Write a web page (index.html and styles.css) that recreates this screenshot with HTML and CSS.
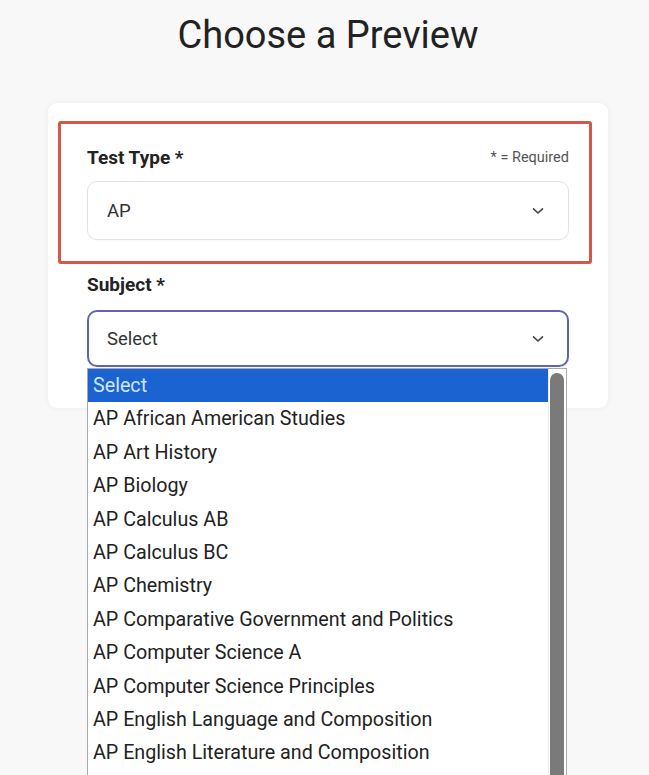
FILE: index.html
```html
<!DOCTYPE html>
<html lang="en">
<head>
<meta charset="utf-8">
<title>Choose a Preview</title>
<link rel="stylesheet" href="styles.css">
</head>
<body>
<main class="page">
  <h1 class="title">Choose a Preview</h1>
  <section class="card">
    <div class="field field-test">
      <div class="highlight"></div>
      <div class="label-row">
        <label class="label">Test Type *</label>
        <span class="required">* = Required</span>
      </div>
      <div class="select">
        <span class="value">AP</span>
        <svg class="chev" width="12" height="8" viewBox="0 0 12 8"><path d="M1.5 1.8 L6 6 L10.5 1.8" fill="none" stroke="#444" stroke-width="1.6" stroke-linecap="round" stroke-linejoin="round"/></svg>
      </div>
    </div>
    <div class="field field-subject">
      <div class="label-row">
        <label class="label">Subject *</label>
      </div>
      <div class="select select-focus">
        <span class="value">Select</span>
        <svg class="chev" width="12" height="8" viewBox="0 0 12 8"><path d="M1.5 1.8 L6 6 L10.5 1.8" fill="none" stroke="#444" stroke-width="1.6" stroke-linecap="round" stroke-linejoin="round"/></svg>
      </div>
      <div class="dropdown">
        <ul class="options">
          <li class="opt active">Select</li>
          <li class="opt">AP African American Studies</li>
          <li class="opt">AP Art History</li>
          <li class="opt">AP Biology</li>
          <li class="opt">AP Calculus AB</li>
          <li class="opt">AP Calculus BC</li>
          <li class="opt">AP Chemistry</li>
          <li class="opt">AP Comparative Government and Politics</li>
          <li class="opt">AP Computer Science A</li>
          <li class="opt">AP Computer Science Principles</li>
          <li class="opt">AP English Language and Composition</li>
          <li class="opt">AP English Literature and Composition</li>
        </ul>
        <div class="scrollbar"><div class="thumb"></div></div>
      </div>
    </div>
  </section>
</main>
</body>
</html>
```

FILE: styles.css
```css
html, body {
  margin: 0;
  padding: 0;
  background: #f8f8f8;
  height: 100%;
  overflow: hidden;
}
body {
  font-family: Roboto, "Liberation Sans", Arial, sans-serif;
  color: #222;
}
.page {
  width: 560px;
  margin-left: 48px;
}
.title {
  margin: 0;
  padding-top: 13px;
  height: 103px;
  box-sizing: border-box;
  font-size: 38px;
  line-height: 44px;
  font-weight: 400;
  text-align: center;
  color: #222;
}
.card {
  background: #fff;
  border-radius: 9px;
  box-shadow: 0 0 6px rgba(0,0,0,0.05);
  padding: 43px 39px 41px;
}
.field {
  position: relative;
}
.highlight {
  position: absolute;
  left: -29px;
  top: -25px;
  right: -23px;
  height: 143px;
  box-sizing: border-box;
  border: 3px solid #d4574a;
  border-radius: 3px;
  pointer-events: none;
}
.label-row {
  display: flex;
  align-items: center;
  justify-content: space-between;
  height: 22px;
}
.label {
  font-size: 19px;
  font-weight: 700;
  color: #222;
}
.required {
  font-size: 14.5px;
  color: #555;
}
.select {
  margin-top: 13px;
  height: 59px;
  box-sizing: border-box;
  border: 1px solid #e2e2e2;
  border-radius: 10px;
  display: flex;
  align-items: center;
  justify-content: space-between;
  padding: 0 24px 0 19px;
  box-shadow: 0 1px 2px rgba(0,0,0,0.03);
}
.value {
  font-size: 18.5px;
  color: #333;
}
.field-subject {
  margin-top: 33px;
}
.select-focus {
  margin-top: 15px;
  height: 57px;
  border: 2px solid #6064b0;
  padding-left: 18px;
  padding-right: 23px;
}
.dropdown {
  position: absolute;
  left: 0;
  top: 95px;
  width: 480px;
  height: 420px;
  box-sizing: border-box;
  background: #fff;
  border: 1px solid #a8a8a8;
  display: flex;
}
.options {
  list-style: none;
  margin: 0;
  padding: 0;
  flex: 1;
}
.opt {
  height: 33.4px;
  line-height: 33.4px;
  padding-left: 5px;
  font-size: 19.7px;
  color: #222;
  white-space: nowrap;
}
.opt.active {
  background: #1a63d1;
  color: #cde6ff;
}
.scrollbar {
  width: 18px;
  background: #fff;
  border-left: 1px solid #ededed;
  padding: 4px 2px 0 1px;
  box-sizing: border-box;
}
.thumb {
  height: 100%;
  background: #7a7a7a;
  border-radius: 8px 8px 0 0;
}
```
